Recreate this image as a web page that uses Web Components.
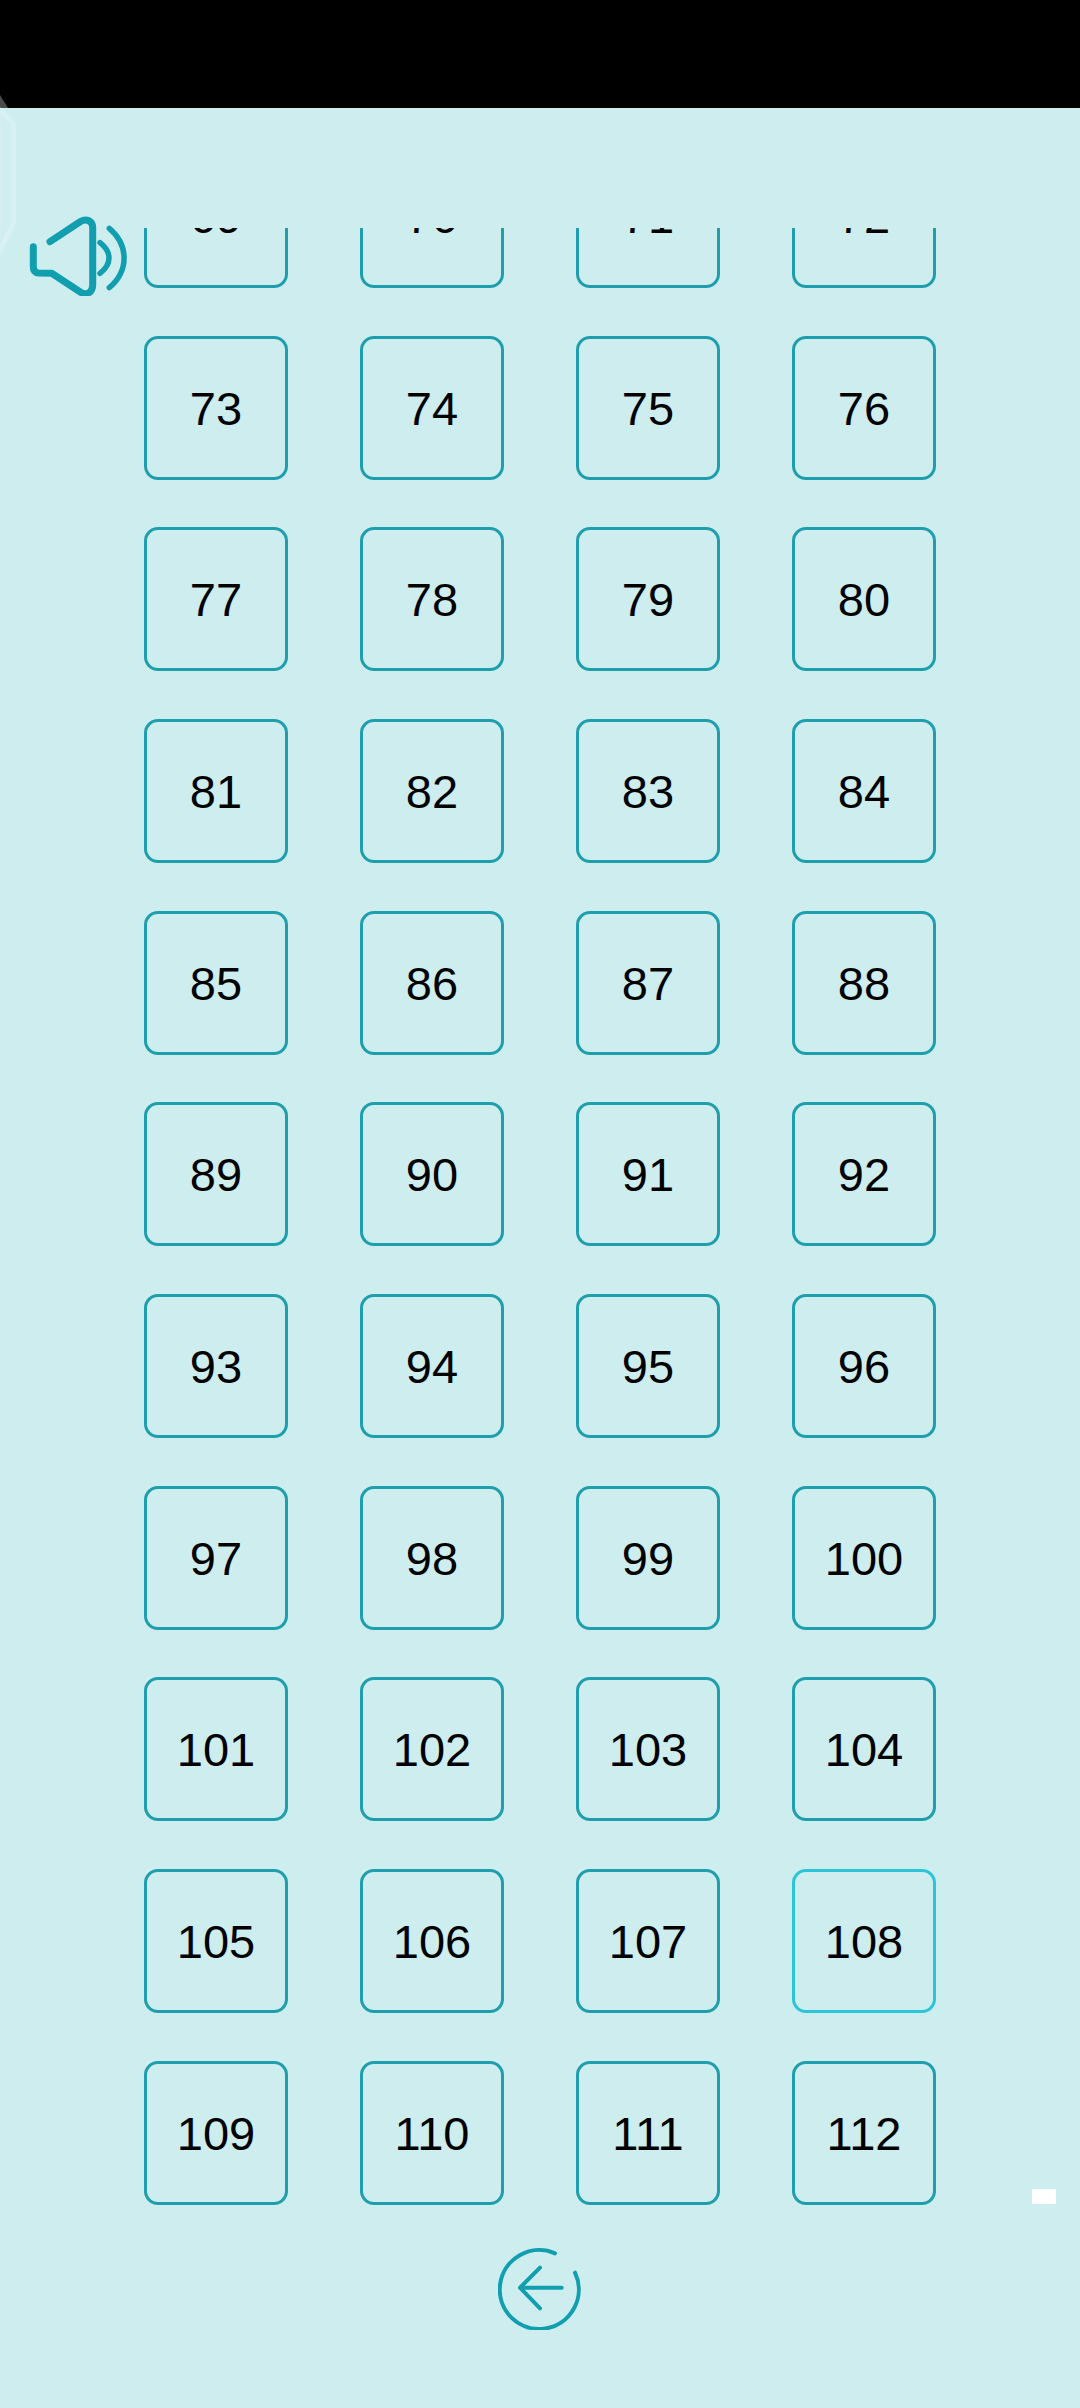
<!DOCTYPE html>
<html>
<head>
<meta charset="utf-8">
<title>Levels</title>
<style>
  html, body { margin: 0; padding: 0; background: #cdedef; }
  body { font-family: "Liberation Sans", Arial, sans-serif; }
</style>
</head>
<body>
<level-page></level-page>
<script>
class LevelTile extends HTMLElement {
  constructor() {
    super();
    this._root = this.attachShadow({ mode: "open" });
  }
  connectedCallback() {
    this._root.innerHTML = /*html*/ `
      <style>
        :host {
          display: flex; align-items: center; justify-content: center;
          box-sizing: border-box; height: 144px; padding-top: 1px;
          border: 3px solid #1f9fad; border-radius: 14px;
          font-size: 47px; color: #000;
        }
        :host([current]) { border-color: #2cc5d8; }
      </style>
      <slot></slot>
    `;
  }
}

class LevelGrid extends HTMLElement {
  constructor() {
    super();
    this._root = this.attachShadow({ mode: "open" });
  }
  connectedCallback() {
    let tiles = "";
    for (let n = 69; n <= 112; n++) {
      tiles += `<level-tile ${n === 108 ? "current" : ""}>${n}</level-tile>`;
    }
    this._root.innerHTML = /*html*/ `
      <style>
        :host { display: block; height: 1977px; overflow: hidden; padding-left: 144px; }
        .tiles {
          display: grid; grid-template-columns: repeat(4, 144px);
          column-gap: 72px; row-gap: 47.66px;
          margin-top: -84px;
        }
      </style>
      <div class="tiles">${tiles}</div>
    `;
  }
}

class SoundButton extends HTMLElement {
  constructor() {
    super();
    this._root = this.attachShadow({ mode: "open" });
  }
  connectedCallback() {
    this._root.innerHTML = /*html*/ `
      <style>
        :host { display: block; position: absolute; left: 28px; top: 212px; width: 100px; height: 84px; }
        svg { display: block; }
      </style>
      <svg width="100" height="84" viewBox="28 212 100 84" fill="none" stroke="#119fb0" stroke-linecap="round" stroke-linejoin="round">
        <path stroke-width="7" d="M50 241.7 L80.5 221.5 C86.5 218 92.7 221 92.7 227.5 L92.7 285 C92.7 292 87 296 81 292.5 L51.7 273.3 L38.5 273 C35 272.8 33.3 270.5 33.3 267 L33.3 246.7"/>
        <path stroke-width="5.5" d="M100 242.7 C112 252 112 264 100 273.3"/>
        <path stroke-width="5.5" d="M109.3 228.3 C129 245 129 271 109.3 287.7"/>
      </svg>
    `;
  }
}

class BackButton extends HTMLElement {
  constructor() {
    super();
    this._root = this.attachShadow({ mode: "open" });
  }
  connectedCallback() {
    this._root.innerHTML = /*html*/ `
      <style>
        :host { display: flex; justify-content: center; padding-top: 41px; }
        svg { display: block; }
      </style>
      <svg width="84" height="84" viewBox="498 2246 84 84" fill="none" stroke="#119fb0" stroke-linecap="round" stroke-linejoin="round">
        <path stroke-width="4" d="M555 2253.3 A39.5 39.5 0 1 0 575 2272.7"/>
        <path stroke-width="4" d="M561.7 2287.7 L520 2287.7 M540 2267.7 L520 2287.7 L540 2308.3"/>
      </svg>
    `;
  }
}

class LevelPage extends HTMLElement {
  constructor() {
    super();
    this._root = this.attachShadow({ mode: "open" });
  }
  connectedCallback() {
    this._root.innerHTML = /*html*/ `
      <style>
        :host { display: block; position: relative; height: 2408px; overflow: hidden; background: #cdedef; }
        .status { height: 108px; background: #000; }
        .content { padding-top: 120px; }
        .glass { position: absolute; left: 0; top: 90px; }
        .marker { position: absolute; left: 1032px; top: 2189px; width: 24px; height: 15px; background: #fff; }
      </style>
      <div class="status"></div>
      <div class="content">
        <level-grid></level-grid>
        <back-button></back-button>
      </div>
      <svg class="glass" width="20" height="170" viewBox="0 90 20 170" fill="none">
        <polygon points="0,95 8,108 0,108" fill="#4a4a4a"/>
        <path d="M-2 108 L13.5 124 L13.5 224 L-2 254 Z" fill="#fff" fill-opacity=".08" stroke="#fff" stroke-opacity=".22" stroke-width="5"/>
      </svg>
      <sound-button></sound-button>
      <div class="marker"></div>
    `;
  }
}

window.customElements.define("level-tile", LevelTile);
window.customElements.define("level-grid", LevelGrid);
window.customElements.define("sound-button", SoundButton);
window.customElements.define("back-button", BackButton);
window.customElements.define("level-page", LevelPage);
</script>
</body>
</html>
